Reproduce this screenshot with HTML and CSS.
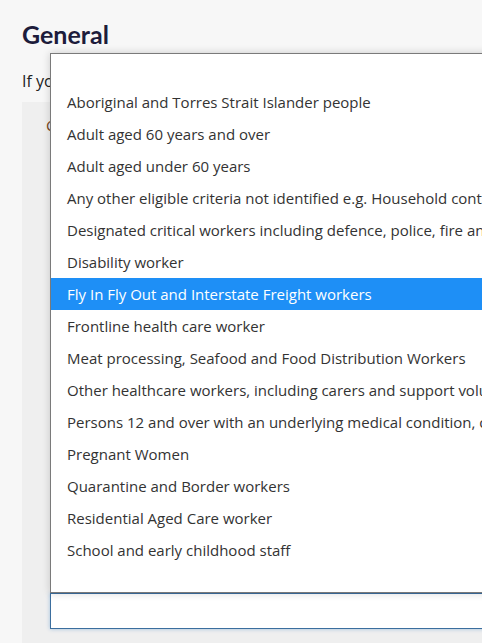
FILE: index.html
```html
<!DOCTYPE html>
<html lang="en">
<head>
  <meta charset="UTF-8" />
  <title>General</title>
  <link rel="stylesheet" href="styles.css">
</head>
<body>
  <h1 class="title">General</h1>
  <p class="intro">If you are eligible for a vaccine, tell us which group you belong to.</p>

  <div class="panel">
    <div class="question">Category of eligibility</div>

    <div class="select-wrap">
      <!-- lista abierta del select -->
      <ul class="options">
        <li class="blank"></li>
        <li>Aboriginal and Torres Strait Islander people</li>
        <li>Adult aged 60 years and over</li>
        <li>Adult aged under 60 years</li>
        <li>Any other eligible criteria not identified e.g. Household contacts</li>
        <li>Designated critical workers including defence, police, fire and emergency</li>
        <li>Disability worker</li>
        <li class="active">Fly In Fly Out and Interstate Freight workers</li>
        <li>Frontline health care worker</li>
        <li>Meat processing, Seafood and Food Distribution Workers</li>
        <li>Other healthcare workers, including carers and support volunteers</li>
        <li>Persons 12 and over with an underlying medical condition, or disability</li>
        <li>Pregnant Women</li>
        <li>Quarantine and Border workers</li>
        <li>Residential Aged Care worker</li>
        <li>School and early childhood staff</li>
      </ul>
      <div class="select-box"></div>
    </div>
  </div>
</body>
</html>
```

FILE: styles.css
```css
/* === Reset y fondo === */
* { margin:0; padding:0; box-sizing:border-box; }
html, body {
  width:100%; height:100%;
  overflow: hidden;
}
body {
  background: #f7f7f7;
  font-family: "Open Sans", "Noto Sans", sans-serif;
  color: #222;
  padding: 18px 0 0 22px;
}

/* === Cabecera === */
.title {
  font-family: Lato, "Open Sans", sans-serif;
  font-weight: 700;
  font-size: 25px;
  line-height: 32px;
  color: #1d1c3b;
}
.intro {
  margin-top: 20px;
  font-size: 16px;
  line-height: 22px;
  white-space: nowrap;
}

/* === Panel gris === */
.panel {
  margin-top: 10px;
  width: 520px;
  height: 600px;
  background: #efefef;
  padding: 13px 0 0 28px;
}
.question {
  margin-left: -4px;
  font-size: 15px;
  line-height: 20px;
  color: #7a4a24;
  white-space: nowrap;
}

/* === Select con lista abierta === */
.select-wrap {
  position: relative;
  margin-top: 458px;
  width: 500px;
}
.select-box {
  height: 36px;
  background: #fff;
  border: 1px solid #3b6e9e;
  box-shadow: 0 0 4px rgba(59,130,200,0.45);
}
.options {
  position: absolute;
  left: 0; bottom: 100%;
  width: 500px;
  list-style: none;
  background: #fff;
  border: 1px solid #7a7a7a;
  padding-bottom: 26px;
  box-shadow: 0 0 8px rgba(0,0,0,0.18);
}
.options li {
  height: 32px;
  line-height: 32px;
  padding-left: 16px;
  font-size: 15px;
  color: #333;
  white-space: nowrap;
  overflow: hidden;
}
.options li.active {
  background: #1e8ff6;
  color: #fff;
}
```
